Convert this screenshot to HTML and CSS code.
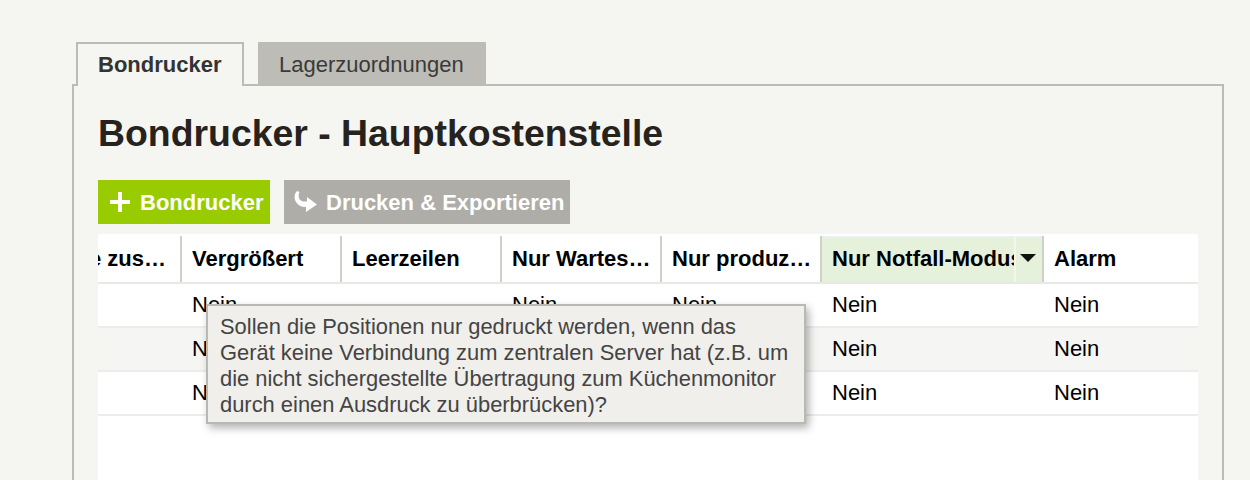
FILE: index.html
```html
<!DOCTYPE html>
<html lang="de">
<head>
<meta charset="utf-8">
<title>Bondrucker</title>
<link rel="stylesheet" href="styles.css">
</head>
<body>
<div class="page">
  <div class="tabs">
    <div class="tab tab-active">Bondrucker</div>
    <div class="tab tab-idle">Lagerzuordnungen</div>
  </div>
  <div class="panel">
    <h1 class="title">Bondrucker - Hauptkostenstelle</h1>
    <div class="toolbar">
      <div class="btn btn-green">
        <svg class="icon-plus" width="22" height="22" viewBox="0 0 22 22"><path d="M9 1h4v8h8v4h-8v8H9v-8H1V9h8z" fill="#fff"/></svg>
        <span>Bondrucker</span>
      </div>
      <div class="btn btn-gray">
        <svg class="icon-arrow" width="24" height="22" viewBox="0 0 24 22"><path d="M3 0C0 3 0 8 2 11c2 3 5 5 10 5v5l11-7.500L13 6v4.500C9 11 6 10 5 7c-.5-2-.5-4 .5-6z" fill="#fff"/></svg>
        <span>Drucken &amp; Exportieren</span>
      </div>
    </div>
    <div class="grid">
      <div class="row head">
        <div class="cell c0"><span class="clip-end">Menge zus…</span></div>
        <div class="cell c1">Vergrößert</div>
        <div class="cell c1">Leerzeilen</div>
        <div class="cell c1">Nur Wartes…</div>
        <div class="cell c1">Nur produz…</div>
        <div class="cell c2"><span class="sort-label">Nur Notfall-Modus</span><span class="sort-btn"><span class="caret"></span></span></div>
        <div class="cell c3">Alarm</div>
      </div>
      <div class="row">
        <div class="cell c0"></div><div class="cell c1">Nein</div><div class="cell c1"></div><div class="cell c1">Nein</div><div class="cell c1">Nein</div><div class="cell c2">Nein</div><div class="cell c3">Nein</div>
      </div>
      <div class="row alt">
        <div class="cell c0"></div><div class="cell c1">Nein</div><div class="cell c1"></div><div class="cell c1">Nein</div><div class="cell c1">Nein</div><div class="cell c2">Nein</div><div class="cell c3">Nein</div>
      </div>
      <div class="row">
        <div class="cell c0"></div><div class="cell c1">Nein</div><div class="cell c1"></div><div class="cell c1">Nein</div><div class="cell c1">Nein</div><div class="cell c2">Nein</div><div class="cell c3">Nein</div>
      </div>
      <div class="filler"></div>
    </div>
  </div>
  <div class="tooltip">Sollen die Positionen nur gedruckt werden, wenn das<br>Gerät keine Verbindung zum zentralen Server hat (z.B. um<br>die nicht sichergestellte Übertragung zum Küchenmonitor<br>durch einen Ausdruck zu überbrücken)?</div>
</div>
</body>
</html>
```

FILE: styles.css
```css
* { box-sizing: border-box; }
html, body { margin: 0; height: 480px; overflow: hidden; }
body {
  background: #f5f6f1;
  font-family: "Liberation Sans", Arial, sans-serif;
  color: #000;
}
.page { position: relative; padding: 42px 26px 0 72px; height: 480px; overflow: hidden; }
.tabs { display: flex; gap: 14px; padding-left: 4px; position: relative; z-index: 1; }
.tab { height: 44px; font-size: 22px; line-height: 42px; }
.tab-active {
  width: 168px; padding-left: 20px;
  font-weight: bold; color: #333;
  background: #f5f6f1;
  border: 2px solid #bcbcb6; border-bottom: 0;
}
.tab-idle {
  width: 228px; padding-left: 21px; height: 42px; line-height: 46px;
  color: #3a3a38; background: #bdbcb7;
}
.panel {
  margin-top: -2px;
  height: 396px;
  border: 2px solid #bcbcb6; border-bottom: 0;
  padding: 0 24px;
}
.title {
  margin: 0; padding-top: 25px;
  font-size: 37.4px; line-height: 44px; font-weight: bold; color: #26221d;
}
.toolbar { display: flex; gap: 14px; margin-top: 25px; }
.btn {
  height: 44px; display: flex; align-items: center; padding-top: 1px;
  color: #fff; font-size: 22px; font-weight: bold;
}
.btn svg { flex: none; margin-top: -1px; }
.btn-green { width: 172px; background: #99cc00; padding-left: 11px; gap: 9px; }
.btn-gray { width: 286px; background: #aeada8; padding-left: 10px; gap: 8px; }
.grid { margin-top: 10px; background: #fff; height: 246px; overflow: hidden; }
.row { display: flex; height: 44px; border-bottom: 2px solid #ececea; font-size: 22px; line-height: 42px; }
.row.alt { background: #f5f5f4; }
.row.head { height: 50px; padding-top: 2px; border-bottom: 2px solid #e8e8e4; font-weight: bold; line-height: 46px; }
.cell { white-space: nowrap; overflow: hidden; }
.c0 { width: 84px; display: flex; justify-content: flex-end; padding-right: 14px; }
.clip-end { flex: none; }
.c1 { width: 160px; padding-left: 10px; }
.c2 { width: 222px; padding-left: 10px; }
.c3 { flex: 1; padding-left: 10px; }
.head .cell { border-right: 2px solid #d0d0cb; height: 46px; }
.head .c3 { border-right: 0; }
.head .c2 { display: flex; background: #e6f1db; padding-left: 10px; padding-right: 0; box-shadow: inset 0 2px 0 #e8f0f6; }
.sort-label { width: 182px; overflow: hidden; flex: none; }
.sort-btn { flex: 1; border-left: 2px solid #f2f7ea; display: flex; justify-content: center; padding: 18px 2px 0 0; }
.caret { width: 0; height: 0; border-left: 8px solid transparent; border-right: 8px solid transparent; border-top: 8px solid #111; }
.filler { height: 64px; }
.tooltip {
  position: absolute; left: 206px; top: 304px; width: 600px; height: 120px;
  padding: 8px 12px;
  background: #f0efeb; border: 2px solid #b9b9b3;
  box-shadow: 3px 4px 8px rgba(0,0,0,.3);
  color: #444; font-size: 21.9px; line-height: 26px; white-space: nowrap;
}
```
